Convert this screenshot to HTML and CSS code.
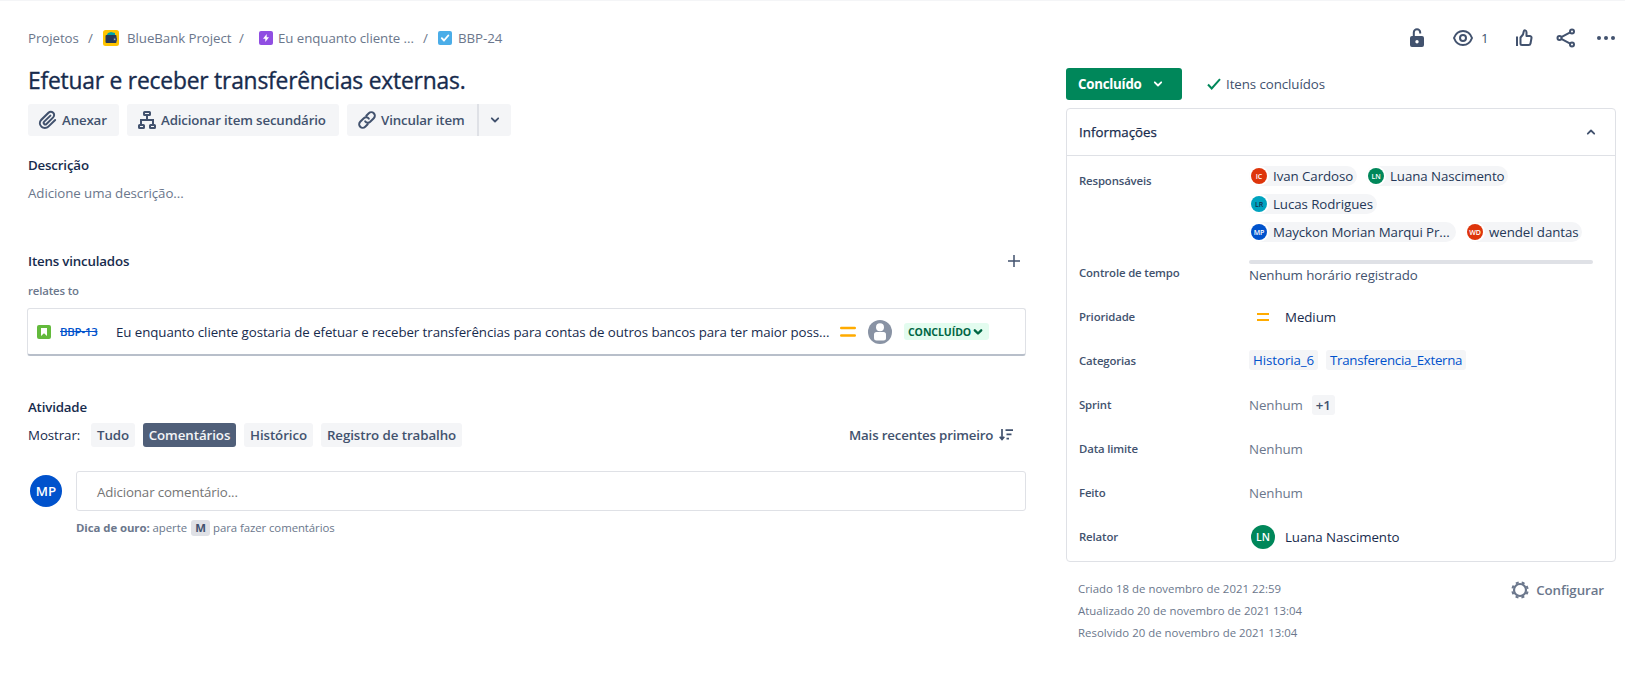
FILE: index.html
```html
<!DOCTYPE html>
<html lang="pt-BR">
<head>
<meta charset="utf-8">
<title>BBP-24</title>
<link rel="stylesheet" href="styles.css">
</head>
<body>
<div class="page">
  <main class="main">
    <nav class="crumbs">
      <span class="crumb w-projects">Projetos</span><span class="slash">/</span>
      <svg class="i16" viewBox="0 0 16 16"><rect width="16" height="16" rx="2.500" fill="#ffc400"/><path d="M3.500 5.500L5 3l3-1 4 1v3H3.500z" fill="#00a3a8"/><rect x="2.500" y="5" width="11" height="8" rx="1" fill="#253858"/><rect x="10" y="7.500" width="4" height="3.500" rx="1" fill="#344563"/><circle cx="11.700" cy="9.200" r=".8" fill="#b3bac5"/></svg>
      <span class="crumb w-bank">BlueBank Project</span><span class="slash s2">/</span>
      <svg class="i14" viewBox="0 0 14 14"><rect width="14" height="14" rx="2" fill="#904ee2"/><path d="M7.700 3v3.300H10L6.300 11V7.700H4z" fill="#fff"/></svg>
      <span class="crumb w-epic">Eu enquanto cliente ...</span><span class="slash s3">/</span>
      <svg class="i14" viewBox="0 0 14 14"><rect width="14" height="14" rx="2" fill="#4bade8"/><path d="M3.800 7.200l2.200 2.300 4.300-5" fill="none" stroke="#fff" stroke-width="1.900" stroke-linecap="round" stroke-linejoin="round"/></svg>
      <span class="crumb">BBP-24</span>
    </nav>
    <h1 class="title">Efetuar e receber transferências externas.</h1>
    <div class="actions">
      <button class="btn b-attach"><svg class="i24" viewBox="0 0 24 24"><path d="M11.643 17.965c-1.530 1.495-4.016 1.496-5.542.004a3.773 3.773 0 0 1 .002-5.412l7.147-6.985a2.316 2.316 0 0 1 3.239.003c.894.873.895 2.285.001 3.160l-6.703 6.549a.653.653 0 0 1-.914-.008.622.622 0 0 1 0-.902l6.229-6.087a.941.941 0 0 0 0-1.353.995.995 0 0 0-1.386 0l-6.229 6.087a2.502 2.502 0 0 0 0 3.607 2.643 2.643 0 0 0 3.683.009l6.703-6.550a4.173 4.173 0 0 0-.001-5.969c-1.697-1.658-4.461-1.659-6.160.001l-7.147 6.985A5.650 5.650 0 0 0 4.713 19.320c2.294 2.242 6.020 2.242 8.316-.002l6.839-6.683a.941.941 0 0 0 0-1.353.995.995 0 0 0-1.386 0l-6.839 6.683z" fill="currentColor"/></svg><span>Anexar</span></button>
      <button class="btn b-child"><svg class="i24" viewBox="0 0 24 24" fill="none" stroke="currentColor" stroke-width="2"><rect x="9" y="4" width="6" height="3" rx=".6"/><path d="M12 7v5M6 16v-4h12v4"/><rect x="4" y="17" width="5" height="3" rx=".6"/><rect x="15" y="17" width="5" height="3" rx=".6"/></svg><span>Adicionar item secundário</span></button>
      <div class="split">
        <button class="btn b-link"><svg class="i24" viewBox="0 0 24 24" fill="none" stroke="currentColor" stroke-width="2" stroke-linecap="round"><path d="M11.300 7.700l2.500-2.500a3.400 3.400 0 0 1 5 5l-3.600 3.600a3.400 3.400 0 0 1-5-.4M12.700 16.300l-2.500 2.500a3.400 3.400 0 0 1-5-5L8.800 10.200a3.400 3.400 0 0 1 5 .4"/></svg><span>Vincular item</span></button>
        <button class="btn b-more"><svg class="chev" viewBox="0 0 10 8"><path d="M1.800 2.300L5 5.500l3.200-3.200"/></svg></button>
      </div>
    </div>
    <h2 class="h desc-h">Descrição</h2>
    <p class="placeholder">Adicione uma descrição...</p>
    <div class="linked-head"><h2 class="h">Itens vinculados</h2><svg class="plus" viewBox="0 0 12 12"><path d="M6 0v12M0 6h12" stroke="#42526e" stroke-width="1.500"/></svg></div>
    <h3 class="rel">relates to</h3>
    <div class="card">
      <svg class="i14" viewBox="0 0 14 14"><rect width="14" height="14" rx="2" fill="#63ba3c"/><path d="M4 3h6v8L7 8.200 4 11z" fill="#fff"/></svg>
      <a class="key">BBP-13</a>
      <span class="summary">Eu enquanto cliente gostaria de efetuar e receber transferências para contas de outros bancos para ter maior poss...</span>
      <svg class="prio" viewBox="0 0 16 12"><path d="M1.200 2h13.600M1.200 9.500h13.600" stroke="#ffab00" stroke-width="2.400" stroke-linecap="round"/></svg>
      <svg class="i24 person" viewBox="0 0 24 24"><circle cx="12" cy="12" r="12" fill="#8993a4"/><circle cx="12" cy="7.200" r="4" fill="#fff"/><rect x="6" y="12" width="12" height="8.500" rx="2.500" fill="#fff"/></svg>
      <span class="lozenge"><span>CONCLUÍDO</span><svg class="chev bold" viewBox="0 0 10 8"><path d="M1.800 2.300L5 5.500l3.200-3.200"/></svg></span>
    </div>
    <h2 class="h act-h">Atividade</h2>
    <div class="filters">
      <span class="show">Mostrar:</span>
      <button class="tab t1">Tudo</button><button class="tab t2 on">Comentários</button><button class="tab t3">Histórico</button><button class="tab t4">Registro de trabalho</button>
      <span class="sort"><span>Mais recentes primeiro</span><svg class="sorti" viewBox="0 0 14 12" fill="none" stroke="#42526e" stroke-width="1.700"><path d="M3 0v10M.7 7.800L3 10.400l2.300-2.600M6.500 1.200H14M7.500 5.400h5M7.500 9.600h2.500"/></svg></span>
    </div>
    <div class="comment">
      <span class="av big blue">MP</span>
      <div class="field">Adicionar comentário...</div>
    </div>
    <p class="tip"><b>Dica de ouro:</b> <span class="tip-a">aperte</span> <kbd>M</kbd> <span>para fazer comentários</span></p>
  </main>
  <aside class="side">
    <div class="tools">
      <svg class="i24" viewBox="0 0 24 24"><path d="M8.800 11V6.500a3.200 3.200 0 0 1 6.400 0V7.500" fill="none" stroke="#42526e" stroke-width="2"/><path d="M7 10h10a2 2 0 0 1 2 2v7a2 2 0 0 1-2 2H7a2 2 0 0 1-2-2v-7a2 2 0 0 1 2-2zm5 4a1.700 1.700 0 1 0 0 3.400 1.700 1.700 0 0 0 0-3.400z" fill="#42526e"/></svg>
      <span class="watch"><svg class="i24" viewBox="0 0 24 24" fill="none" stroke="#42526e" stroke-width="2"><path d="M3 12c1.500-4 5-7 9-7s7.500 3 9 7c-1.500 4-5 7-9 7s-7.500-3-9-7z"/><circle cx="12" cy="12" r="3"/></svg><span>1</span></span>
      <svg class="i24 thumb" viewBox="0 0 24 24" fill="none" stroke="#42526e" stroke-width="2" stroke-linejoin="round"><path d="M5 10.500V20"/><path d="M8.500 11.500l2.500-3 .8-3.300c.3-1.300 2.700-1.200 2.700 1V10h3.200c1.200 0 2 .9 1.800 2l-1 5.500c-.2 1-.9 1.500-1.800 1.500h-6.700c-.9 0-1.500-.6-1.500-1.500z"/></svg>
      <svg class="i24 share" viewBox="0 0 24 24" fill="none" stroke="#42526e" stroke-width="2"><circle cx="5.500" cy="12" r="2"/><circle cx="18" cy="5.500" r="2"/><circle cx="18" cy="18.500" r="2"/><path d="M7.300 11.100l8.900-4.700M7.300 12.900l8.900 4.700"/></svg>
      <svg class="i24 dots" viewBox="0 0 24 24" fill="#42526e"><circle cx="5" cy="12" r="2"/><circle cx="12" cy="12" r="2"/><circle cx="19" cy="12" r="2"/></svg>
    </div>
    <div class="status">
      <button class="done"><span>Concluído</span><svg class="chev" viewBox="0 0 10 8"><path d="M1.800 2.300L5 5.500l3.200-3.200"/></svg></button>
      <svg class="check" viewBox="0 0 14 12"><path d="M1 6.500l3.700 4L13 1.200" fill="none" stroke="#00875a" stroke-width="2"/></svg>
      <span class="resolved">Itens concluídos</span>
    </div>
    <section class="panel">
      <header class="phead"><span>Informações</span><svg class="chev" viewBox="0 0 10 8"><path d="M1.800 5.700L5 2.500l3.200 3.200"/></svg></header>
      <dl class="rows">
        <dt class="r1">Responsáveis</dt>
        <dd class="people">
          <span class="chip c1"><i class="av sm red">IC</i>Ivan Cardoso</span><span class="chip c2"><i class="av sm green">LN</i>Luana Nascimento</span>
          <span class="chip c3"><i class="av sm teal">LR</i>Lucas Rodrigues</span><span class="break"></span>
          <span class="chip c4"><i class="av sm blue">MP</i>Mayckon Morian Marqui Pr...</span><span class="chip c5"><i class="av sm red">WD</i>wendel dantas</span>
        </dd>
        <dt>Controle de tempo</dt>
        <dd class="time"><span class="bar"></span><span>Nenhum horário registrado</span></dd>
        <dt>Prioridade</dt>
        <dd class="medium"><svg class="pr2" viewBox="0 0 12 8"><path d="M0 1h12M0 7h12" stroke="#ffab00" stroke-width="2"/></svg><span>Medium</span></dd>
        <dt>Categorias</dt>
        <dd class="tags"><a class="tag g1">Historia_6</a><a class="tag g2">Transferencia_Externa</a></dd>
        <dt>Sprint</dt>
        <dd class="none"><span>Nenhum</span><span class="plus1">+1</span></dd>
        <dt>Data limite</dt>
        <dd class="none">Nenhum</dd>
        <dt>Feito</dt>
        <dd class="none">Nenhum</dd>
        <dt>Relator</dt>
        <dd class="reporter"><i class="av md green">LN</i><span>Luana Nascimento</span></dd>
      </dl>
    </section>
    <footer class="foot">
      <div class="dates"><span>Criado 18 de novembro de 2021 22:59</span><span>Atualizado 20 de novembro de 2021 13:04</span><span>Resolvido 20 de novembro de 2021 13:04</span></div>
      <div class="config"><svg class="gear" viewBox="0 0 18 18" fill="none" stroke="#6b778c"><circle cx="9" cy="9" r="6" stroke-width="2.200"/><circle cx="9" cy="9" r="7.700" stroke-width="2" stroke-dasharray="3 3.047" stroke-dashoffset="-1.500"/></svg><span>Configurar</span></div>
    </footer>
  </aside>
</div>
</body>
</html>
```
FILE: styles.css
```css
* { box-sizing: border-box; }
body { margin: 0; background: #fff; color: #172b4d; font: 13.300px/20px "Open Sans", "Noto Sans", sans-serif; letter-spacing: -0.070px; }
h1, h2, h3, p, dl, dd { margin: 0; }
button { border: 0; padding: 0; font: inherit; color: inherit; letter-spacing: inherit; }
svg { display: block; flex: none; }
span, a { white-space: nowrap; }
.page { display: flex; height: 691px; border-top: 1px solid #f4f5f7; overflow: hidden; }
.main { width: 1026px; padding: 27px 0 0 28px; display: flex; flex-direction: column; }
.side { width: 550px; margin-left: 40px; padding-top: 25px; }
.i14 { width: 14px; height: 14px; }
.i16 { width: 16px; height: 16px; }
.i24 { width: 24px; height: 24px; }

.crumbs { display: flex; align-items: center; height: 20px; color: #6b778c; }
.w-projects { width: 60px; }
.w-bank { width: 112px; margin-left: 8px; }
.w-epic { width: 145px; margin-left: 5px; }
.w-epic + .slash + svg + .crumb { margin-left: 6px; }
.slash { width: 15px; }
.s2 { width: 20px; }
.s3 { width: 15px; }
.title { height: 28px; margin-top: 18px; font-size: 22.800px; line-height: 29px; font-weight: 500; letter-spacing: -0.200px; -webkit-text-stroke: 0.350px currentColor; }

.actions { display: flex; gap: 8px; margin-top: 10px; }
.btn { display: flex; align-items: center; height: 32px; background: #f4f5f7; border-radius: 3px; color: #42526e; font-weight: 600; padding-left: 8px; gap: 2px; letter-spacing: -0.150px; }
.b-attach { width: 91px; }
.b-child { width: 212px; }
.split { display: flex; }
.b-link { width: 130px; border-radius: 3px 0 0 3px; }
.b-more { width: 34px; border-left: 2px solid #dfe1e6; border-radius: 0 3px 3px 0; padding-left: 11px; }
.chev { width: 10px; height: 8px; fill: none; stroke: currentColor; stroke-width: 1.800; stroke-linecap: round; stroke-linejoin: round; }
.h { font-size: 13.300px; line-height: 20px; font-weight: 600; letter-spacing: -0.170px; }
.desc-h { margin-top: 19px; }
.placeholder { margin-top: 8px; color: #6b778c; }
.linked-head { display: flex; align-items: center; justify-content: space-between; margin-top: 48px; padding-right: 6px; }
.plus { width: 12px; height: 12px; }
.rel { margin-top: 10px; font-size: 11.400px; line-height: 20px; font-weight: 600; color: #6b778c; letter-spacing: -0.150px; }
.card { display: flex; align-items: center; height: 47px; margin: 7px 0 0 -1px; padding-left: 9px; border: 1px solid #dfe1e6; border-bottom: 2px solid #b8bfca; border-radius: 3px; height: 48px; }
.key { width: 56px; margin-left: 9px; font-size: 11.400px; font-weight: 600; color: #0052cc; text-decoration: line-through; letter-spacing: -0.200px; }
.summary { width: 724px; }
.prio { width: 16px; height: 12px; }
.person { margin: 0 12px; }
.lozenge { display: flex; align-items: center; gap: 2px; width: 85px; height: 17px; padding-left: 4px; border-radius: 3px; background: #e3fcef; color: #006644; font-size: 10.500px; font-weight: 700; }
.bold { stroke-width: 2.400; }
.act-h { margin-top: 41px; }
.filters { display: flex; align-items: center; height: 24px; margin-top: 6px; }
.show { width: 63px; }
.tab { height: 24px; margin-right: 8px; border-radius: 3px; background: #f4f5f7; color: #42526e; font-weight: 600; }
.tab.on { background: #505f79; color: #f4f5f7; }
.t1 { width: 44px; }
.t2 { width: 93px; }
.t3 { width: 69px; }
.t4 { width: 141px; }
.sort { display: flex; align-items: center; justify-content: space-between; width: 164px; margin: 0 13px 0 auto; color: #42526e; font-weight: 600; letter-spacing: -0.180px; }
.sorti { width: 14px; height: 12px; }
.comment { display: flex; align-items: center; margin-top: 24px; padding-left: 2px; }
.field { flex: 1; height: 40px; margin-left: 14px; padding-left: 20px; border: 1px solid #dfe1e6; border-radius: 3px; line-height: 40px; color: #757575; letter-spacing: -0.130px; }
.av { display: flex; align-items: center; justify-content: center; flex: none; border-radius: 50%; color: #fff; font-style: normal; font-weight: 600; }
.big { width: 32px; height: 32px; font-size: 13.300px; }
.md { width: 24px; height: 24px; font-size: 10.500px; }
.sm { width: 16px; height: 16px; font-size: 7px; box-shadow: 0 0 0 2px #fff; }
.blue { background: #0052cc; }
.red { background: #de350b; }
.green { background: #00875a; }
.teal { background: #00a3bf; color: #172b4d; }
.tip { display: flex; align-items: center; height: 16px; margin: 9px 0 0 48px; font-size: 11.400px; color: #6b778c; }
.tip-a { margin: 0 4px 0 3px; }
kbd { width: 19px; height: 16px; margin-right: 3px; border-radius: 3px; background: #dfe1e6; color: #42526e; font: 700 11.400px/16px "Open Sans", sans-serif; text-align: center; }

.tools { display: flex; align-items: center; height: 24px; padding-left: 339px; color: #42526e; }
.watch { display: flex; gap: 6px; margin-left: 22px; align-items: center; }
.thumb { margin-left: 23px; }
.share { margin-left: 18px; }
.dots { margin-left: 16px; }
.status { display: flex; align-items: center; height: 32px; margin-top: 18px; }
.done { display: flex; align-items: center; width: 116px; height: 32px; padding-left: 12px; gap: 11px; border-radius: 3px; background: #00875a; color: #fff; font-weight: 700; letter-spacing: -0.250px; }
.check { width: 14px; height: 12px; margin: 0 5px 0 25px; }
.resolved { color: #42526e; }
.panel { height: 454px; margin-top: 8px; border: 1px solid #dfe1e6; border-radius: 4px; }
.phead { display: flex; align-items: center; justify-content: space-between; height: 47px; padding: 0 19px 0 12px; border-bottom: 1px solid #dfe1e6; font-weight: 500; letter-spacing: 0.030px; -webkit-text-stroke: 0.250px currentColor; }
.phead .chev { color: #42526e; }
.rows { display: grid; grid-template-columns: 170px 344px; grid-template-rows: 95px repeat(7, 44px); padding-left: 12px; align-items: center; }
dt { font-size: 11.400px; font-weight: 600; color: #42526e; letter-spacing: -0.150px; }
.r1 { align-self: start; padding-top: 15px; }
.people { display: flex; flex-wrap: wrap; align-self: start; padding-top: 10px; row-gap: 8px; column-gap: 9px; }
.break { width: 180px; }
.chip { display: flex; align-items: center; gap: 6px; height: 20px; padding-left: 2px; border-radius: 10px; background: #f4f5f7; color: #253858; line-height: 19px; }
.c1 { width: 108px; }
.c2 { width: 142px; }
.c3 { width: 128px; }
.c4 { width: 207px; }
.c5 { width: 117px; }
.time { display: flex; flex-direction: column; color: #42526e; padding-bottom: 2px; }
.bar { height: 4px; margin: 1px 0; border-radius: 2px; background: #dfe1e6; }
.medium { display: flex; align-items: center; gap: 16px; padding-left: 8px; }
.pr2 { width: 12px; height: 8px; }
.tags { display: flex; gap: 8px; padding-bottom: 2px; }
.tag { height: 20px; padding-left: 4px; border-radius: 3px; background: #f4f5f7; color: #0052cc; }
.g1 { width: 69px; }
.g2 { width: 140px; letter-spacing: -0.280px; }
.none { display: flex; color: #6b778c; }
.plus1 { width: 23px; height: 20px; margin-left: 9px; border-radius: 3px; background: #f4f5f7; color: #42526e; font-weight: 600; text-align: center; }
.reporter { display: flex; align-items: center; gap: 10px; padding-left: 2px; }
.foot { display: flex; justify-content: space-between; padding: 16px 12px 0; color: #6b778c; }
.dates { display: flex; flex-direction: column; font-size: 11.400px; line-height: 22px; letter-spacing: 0.020px; }
.config { display: flex; align-items: center; gap: 7px; height: 24px; font-weight: 600; }
.gear { width: 18px; height: 18px; }
```
